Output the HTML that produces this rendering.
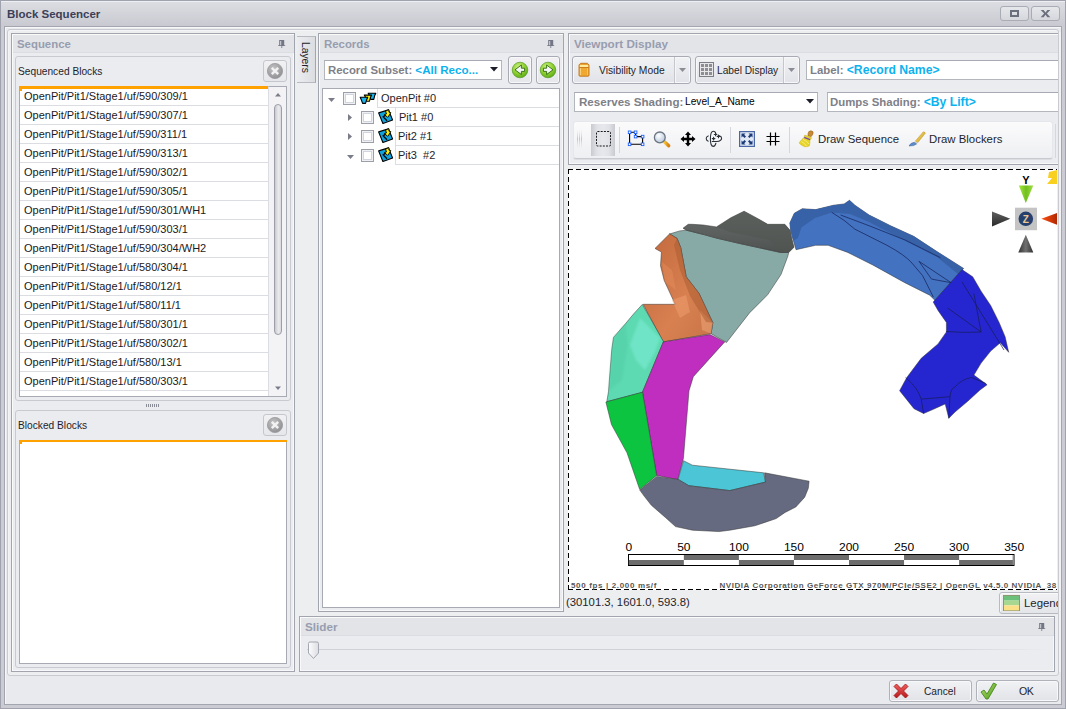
<!DOCTYPE html>
<html><head><meta charset="utf-8">
<style>
*{box-sizing:border-box}
html,body{margin:0;padding:0}
body{width:1066px;height:709px;overflow:hidden;position:relative;background:#cbccd3;font-family:"Liberation Sans",sans-serif;font-size:11px;color:#1e1e2a}
.a{position:absolute}
.t{position:absolute;white-space:nowrap;line-height:14px}
.panel{position:absolute;border:1px solid #a2a4ae;background:#ebecf0;box-shadow:inset 1px 1px 0 #fafafb,inset -1px -1px 0 #f8f8fa}
.hdr{position:absolute;left:1px;right:0;top:1px;height:18px;background:#e3e4e8;border-bottom:1px solid #dcdde2}
.htxt{position:absolute;font-weight:bold;color:#979daf;font-size:11.4px;white-space:nowrap;line-height:14px}
.pin{position:absolute;width:8px;height:9px}
.grp{position:absolute;border:1px solid #c9cacf;border-radius:3px}
.cbtn{position:absolute;border:1px solid #d0d1d6;border-radius:3px;background:linear-gradient(#f1f1f4,#e6e7eb)}
.list{position:absolute;background:#fff;border:1px solid #a8aab3;border-top:none}
.row{position:absolute;left:0;width:248px;height:19px;border-bottom:1px solid #dcdde2}
.row span{position:absolute;left:4px;top:2px;font-size:11px;line-height:14px;white-space:nowrap;color:#1a1a22}
.box{position:absolute;background:#fff;border:1px solid #b4b6be;border-top-color:#a8aab3}
.lbl{font-weight:bold;color:#7e8088}
.cy{font-weight:bold;color:#0cb2f0}
.chk{width:13px;height:13px;border:1px solid #9c9ea8;box-shadow:inset 0 0 0 1px #eef0f3,inset 0 0 0 2px #d2d5de;background:#fff}
.sbtn{position:absolute;border:1px solid #a9abb4;border-radius:3px;background:linear-gradient(#f1f2f4,#e2e3e8);box-shadow:inset 0 0 0 1px #f8f8fa}
</style></head>
<body>
<!-- window frame -->
<div class="a" style="left:0;top:0;width:1066px;height:709px;border:1px solid #a0a3ad;background:#cbccd3"></div>
<div class="a" style="left:1px;top:1px;width:1064px;height:25px;background:linear-gradient(#dcdde2,#c9cad1);border-top:1px solid #eeeff2"></div>
<div class="t" style="left:7px;top:7px;font-weight:bold;font-size:11.5px;color:#3b4058">Block Sequencer</div>
<div class="a" style="left:1000px;top:6px;width:29px;height:15px;border:1px solid #a9abb5;border-radius:3px;background:linear-gradient(#e6e7eb,#d6d7dc)"></div>
<div class="a" style="left:1010px;top:10px;width:9px;height:7px;border:2px solid #6c6f7c"></div>
<div class="a" style="left:1031px;top:6px;width:29px;height:15px;border:1px solid #a9abb5;border-radius:3px;background:linear-gradient(#e6e7eb,#d6d7dc)"></div>
<svg class="a" style="left:1040px;top:10px" width="11" height="8" viewBox="0 0 11 8"><path d="M0.7 0 H3.6 L5.5 2.5 L7.4 0 H10.3 L6.9 3.6 L10.3 7.2 H7.4 L5.5 4.7 L3.6 7.2 H0.7 L4.1 3.6 Z" fill="#6c6f7c"/></svg>
<!-- content area -->
<div class="a" style="left:4px;top:26px;width:1058px;height:679px;border:1px solid #a3a5af;background:#e9eaee;box-shadow:inset 1px 1px 0 #f7f7f9"></div>
<div class="a" style="left:7px;top:29px;width:1052px;height:647px;border:1px solid #cacbd1;border-radius:3px;background:#eceef0;box-shadow:inset 1px 1px 0 #f4f4f6"></div>

<!-- SEQUENCE PANEL -->
<div class="panel" style="left:11px;top:33px;width:284px;height:639px">
  <div class="hdr"></div>
</div>
<div class="htxt" style="left:17px;top:37px">Sequence</div>
<svg class="a" style="left:278px;top:40px" width="8" height="9" viewBox="0 0 8 9"><path d="M1.2 0 H6.2 V5.2 H7.2 V6 H4.2 V8 H3.4 V6 H0.2 V5.2 H1.2 Z" fill="#737684"/><rect x="2.2" y="1" width="1" height="4.2" fill="#d8d9de"/></svg>


<!-- Sequenced Blocks group -->
<div class="grp" style="left:15px;top:56px;width:276px;height:345px"></div>
<div class="t" style="left:18px;top:65px;font-size:10.2px">Sequenced Blocks</div>
<div class="cbtn" style="left:263px;top:60px;width:24px;height:22px;border-color:#c6c7cd"></div>
<svg class="a" style="left:266px;top:62px" width="18" height="18" viewBox="0 0 18 18"><defs><radialGradient id="cg" cx="0.4" cy="0.35" r="0.7"><stop offset="0" stop-color="#c4c4c6"/><stop offset="1" stop-color="#8e8e92"/></radialGradient></defs><circle cx="9" cy="9" r="7.6" fill="url(#cg)" stroke="#9a9a9e" stroke-width="0.8"/><path d="M5.8 5.8 L12.2 12.2 M12.2 5.8 L5.8 12.2" stroke="#f2f2f2" stroke-width="2.4"/></svg>
<div class="list" style="left:19px;top:86px;width:268px;height:311px;overflow:hidden">
  <div class="a" style="left:0;top:1px;width:249px;height:309px;overflow:hidden">
<div class="row" style="top:0px"><span>OpenPit/Pit1/Stage1/uf/590/309/1</span></div>
<div class="row" style="top:19px"><span>OpenPit/Pit1/Stage1/uf/590/307/1</span></div>
<div class="row" style="top:38px"><span>OpenPit/Pit1/Stage1/uf/590/311/1</span></div>
<div class="row" style="top:57px"><span>OpenPit/Pit1/Stage1/uf/590/313/1</span></div>
<div class="row" style="top:76px"><span>OpenPit/Pit1/Stage1/uf/590/302/1</span></div>
<div class="row" style="top:95px"><span>OpenPit/Pit1/Stage1/uf/590/305/1</span></div>
<div class="row" style="top:114px"><span>OpenPit/Pit1/Stage1/uf/590/301/WH1</span></div>
<div class="row" style="top:133px"><span>OpenPit/Pit1/Stage1/uf/590/303/1</span></div>
<div class="row" style="top:152px"><span>OpenPit/Pit1/Stage1/uf/590/304/WH2</span></div>
<div class="row" style="top:171px"><span>OpenPit/Pit1/Stage1/uf/580/304/1</span></div>
<div class="row" style="top:190px"><span>OpenPit/Pit1/Stage1/uf/580/12/1</span></div>
<div class="row" style="top:209px"><span>OpenPit/Pit1/Stage1/uf/580/11/1</span></div>
<div class="row" style="top:228px"><span>OpenPit/Pit1/Stage1/uf/580/301/1</span></div>
<div class="row" style="top:247px"><span>OpenPit/Pit1/Stage1/uf/580/302/1</span></div>
<div class="row" style="top:266px"><span>OpenPit/Pit1/Stage1/uf/580/13/1</span></div>
<div class="row" style="top:285px"><span>OpenPit/Pit1/Stage1/uf/580/303/1</span></div>
<div class="row" style="top:304px"><span>OpenPit/Pit1/Stage1/uf/580/305/1</span></div>
  </div>
  <div class="a" style="left:-1px;top:0;width:252px;height:3px;background:#ffa200"></div>
  <div class="a" style="left:-1px;top:0;width:3px;height:5px;background:#ffa200"></div>
  <div class="a" style="left:248px;top:0;width:19px;height:310px;background:#f3f3f6;border-left:1px solid #dcdde2;border-top:1px solid #a8aab3"></div>
  <svg class="a" style="left:253.5px;top:6px" width="8" height="5"><path d="M1 4.5 L4 1 L7 4.5 Z" fill="#7a7c88"/></svg>
  <div class="a" style="left:254px;top:18px;width:7.5px;height:231px;border:1px solid #9c9ea8;border-radius:4px;background:linear-gradient(90deg,#c9cad0,#ebebee 60%,#d8d9de)"></div>
  <svg class="a" style="left:253.5px;top:300px" width="8" height="5"><path d="M1 0.5 L7 0.5 L4 4 Z" fill="#7a7c88"/></svg>
</div>
<!-- splitter -->
<svg class="a" style="left:145px;top:403px" width="16" height="5"><rect x="1" y="1" width="1" height="3" fill="#8a8c96"/><rect x="3" y="1" width="1" height="3" fill="#8a8c96"/><rect x="5" y="1" width="1" height="3" fill="#8a8c96"/><rect x="7" y="1" width="1" height="3" fill="#8a8c96"/><rect x="9" y="1" width="1" height="3" fill="#8a8c96"/><rect x="11" y="1" width="1" height="3" fill="#8a8c96"/><rect x="13" y="1" width="1" height="3" fill="#8a8c96"/></svg>
<!-- Blocked Blocks group -->
<div class="grp" style="left:15px;top:410px;width:276px;height:258px"></div>
<div class="t" style="left:18px;top:419px;font-size:10.2px">Blocked Blocks</div>
<div class="cbtn" style="left:263px;top:414px;width:24px;height:22px;border-color:#c6c7cd"></div>
<svg class="a" style="left:266px;top:416px" width="18" height="18" viewBox="0 0 18 18"><circle cx="9" cy="9" r="7.6" fill="url(#cg)" stroke="#9a9a9e" stroke-width="0.8"/><path d="M5.8 5.8 L12.2 12.2 M12.2 5.8 L5.8 12.2" stroke="#f2f2f2" stroke-width="2.4"/></svg>
<div class="list" style="left:19px;top:440px;width:268px;height:224px">
  <div class="a" style="left:-1px;top:0;width:268px;height:2px;background:#ffa200"></div><div class="a" style="left:-1px;top:0;width:3px;height:4px;background:#ffa200"></div>
</div>


<!-- LAYERS TAB -->
<div class="a" style="left:297px;top:36px;width:19px;height:47px;border:1px solid #b8bac1;border-right-color:#a4a6af;border-left:none;background:linear-gradient(90deg,#ecedf0,#dcdde1)"></div>
<div class="t" style="left:297px;top:42px;width:14px;height:32px;font-size:10.3px;color:#1e1e2a"><div style="position:absolute;left:15px;top:0;transform-origin:0 0;transform:rotate(90deg);line-height:14px">Layers</div></div>

<!-- RECORDS PANEL -->
<div class="panel" style="left:318px;top:33px;width:246px;height:579px">
  <div class="hdr"></div>
</div>
<div class="htxt" style="left:324px;top:37px">Records</div>
<svg class="a" style="left:547px;top:40px" width="8" height="9" viewBox="0 0 8 9"><path d="M1.2 0 H6.2 V5.2 H7.2 V6 H4.2 V8 H3.4 V6 H0.2 V5.2 H1.2 Z" fill="#737684"/><rect x="2.2" y="1" width="1" height="4.2" fill="#d8d9de"/></svg>
<div class="box" style="left:324px;top:60px;width:178px;height:20px"></div>
<div class="t" style="left:328px;top:63px;font-size:11.4px"><span class="lbl">Record Subset:</span> <span class="cy" style="font-size:11.6px">&lt;All Reco...</span></div>
<svg class="a" style="left:490px;top:67px" width="8" height="5"><path d="M0 0 H8 L4 4.5 Z" fill="#1e1e2a"/></svg>
<div class="cbtn" style="left:508px;top:56px;width:24px;height:28px;border-color:#a9abb4;box-shadow:inset 0 0 0 1px #f8f8fa"></div>
<div class="cbtn" style="left:536px;top:56px;width:24px;height:28px;border-color:#a9abb4;box-shadow:inset 0 0 0 1px #f8f8fa"></div>
<svg class="a" style="left:511px;top:61px" width="18" height="18" viewBox="0 0 18 18"><defs><radialGradient id="gg" cx="0.4" cy="0.3" r="0.75"><stop offset="0" stop-color="#c8ee80"/><stop offset="0.55" stop-color="#8ed030"/><stop offset="1" stop-color="#5aa818"/></radialGradient></defs><circle cx="9" cy="9" r="7.8" fill="url(#gg)" stroke="#4a8f18" stroke-width="0.6"/><path d="M4 8.8 L10.4 4 V7.2 H13.6 V10.4 H10.4 V13.5 Z" fill="#f4f6f8" stroke="#2f6a0c" stroke-width="0.9" stroke-linejoin="round"/></svg>
<svg class="a" style="left:539px;top:61px" width="18" height="18" viewBox="0 0 18 18"><circle cx="9" cy="9" r="7.8" fill="url(#gg)" stroke="#4a8f18" stroke-width="0.6"/><path d="M14 8.8 L7.6 4 V7.2 H4.4 V10.4 H7.6 V13.5 Z" fill="#f4f6f8" stroke="#2f6a0c" stroke-width="0.9" stroke-linejoin="round"/></svg>
<div class="a" style="left:322px;top:88px;width:238px;height:520px;background:#fff;border:1px solid #a8aab3"></div>
<!-- tree rows -->
<div class="a" style="left:377px;top:89px;width:182px;height:19px;border-left:1px solid #dcdde2;border-bottom:1px solid #dcdde2"></div>
<div class="a" style="left:395px;top:108px;width:164px;height:19px;border-left:1px solid #dcdde2;border-bottom:1px solid #dcdde2"></div>
<div class="a" style="left:395px;top:127px;width:164px;height:19px;border-left:1px solid #dcdde2;border-bottom:1px solid #dcdde2"></div>
<div class="a" style="left:395px;top:146px;width:164px;height:19px;border-left:1px solid #dcdde2;border-bottom:1px solid #dcdde2"></div>
<svg class="a" style="left:327px;top:97px" width="9" height="6"><path d="M1 1 H8 L4.5 5 Z" fill="#7a7c88"/></svg>
<svg class="a" style="left:347px;top:113px" width="6" height="9"><path d="M1 1 V8 L5 4.5 Z" fill="#7a7c88"/></svg>
<svg class="a" style="left:347px;top:132px" width="6" height="9"><path d="M1 1 V8 L5 4.5 Z" fill="#7a7c88"/></svg>
<svg class="a" style="left:346px;top:154px" width="9" height="6"><path d="M1 1 H8 L4.5 5 Z" fill="#7a7c88"/></svg>
<div class="a chk" style="left:343px;top:92px"></div>
<div class="a chk" style="left:361px;top:111px"></div>
<div class="a chk" style="left:361px;top:130px"></div>
<div class="a chk" style="left:361px;top:149px"></div>
<svg class="a" style="left:359px;top:92px" width="18" height="13" viewBox="0 0 18 13"><g stroke="#000" stroke-width="1.1" stroke-linejoin="round"><path d="M9.2 1.2 L16.8 1.2 L15.6 3.8 L14.8 7.4 L11.7 7.4 L10.6 3.8 Z" fill="#18b4ee"/><path d="M5.3 3.1 L12.6 3 L11.4 5.6 L10.4 9.3 L7.7 9.3 L6.6 5.6 Z" fill="#f6ee10"/><path d="M1.2 5.3 L8.7 5.3 L7.6 8 L6.5 11.4 L3.6 11.4 L2.4 8 Z" fill="#18b4ee"/></g></svg>
<svg class="a pit" style="left:378px;top:109px" width="16" height="15" viewBox="0 0 16 15"><path d="M0.6 3.9 L10.5 0.9 L14.6 11 L4.9 14.5 Z" fill="#12a2dc" stroke="#000" stroke-width="1.1" stroke-linejoin="round"/><path d="M9.6 4.6 L5.2 7.9 L9 11.8" fill="none" stroke="#000" stroke-width="1.3"/><path d="M7.6 2.2 L10.8 0.6 L11 3.2 L12.8 3.6 L9.8 8.4 L6.4 5.6 L8.4 5 Z" fill="#f6f010" stroke="#000" stroke-width="0.9" stroke-linejoin="round"/></svg>
<svg class="a pit" style="left:378px;top:128px" width="16" height="15" viewBox="0 0 16 15"><path d="M0.6 3.9 L10.5 0.9 L14.6 11 L4.9 14.5 Z" fill="#12a2dc" stroke="#000" stroke-width="1.1" stroke-linejoin="round"/><path d="M9.6 4.6 L5.2 7.9 L9 11.8" fill="none" stroke="#000" stroke-width="1.3"/><path d="M7.6 2.2 L10.8 0.6 L11 3.2 L12.8 3.6 L9.8 8.4 L6.4 5.6 L8.4 5 Z" fill="#f6f010" stroke="#000" stroke-width="0.9" stroke-linejoin="round"/></svg>
<svg class="a pit" style="left:378px;top:147px" width="16" height="15" viewBox="0 0 16 15"><path d="M0.6 3.9 L10.5 0.9 L14.6 11 L4.9 14.5 Z" fill="#12a2dc" stroke="#000" stroke-width="1.1" stroke-linejoin="round"/><path d="M9.6 4.6 L5.2 7.9 L9 11.8" fill="none" stroke="#000" stroke-width="1.3"/><path d="M7.6 2.2 L10.8 0.6 L11 3.2 L12.8 3.6 L9.8 8.4 L6.4 5.6 L8.4 5 Z" fill="#f6f010" stroke="#000" stroke-width="0.9" stroke-linejoin="round"/></svg>
<div class="t" style="left:381px;top:91px">OpenPit #0</div>
<div class="t" style="left:399px;top:110px">Pit1 #0</div>
<div class="t" style="left:398px;top:129px">Pit2 #1</div>
<div class="t" style="left:398px;top:148px">Pit3 &nbsp;#2</div>


<div class="a" style="left:0;top:0;width:1058px;height:676px;overflow:hidden">
<!-- VIEWPORT DISPLAY PANEL -->
<div class="panel" style="left:568px;top:33px;width:500px;height:132px">
  <div class="hdr"></div>
</div>
<div class="htxt" style="left:574px;top:37px;font-size:11.7px">Viewport Display</div>
<!-- visibility mode split button -->
<div class="sbtn" style="left:572px;top:56px;width:119px;height:28px"></div>
<div class="a" style="left:674px;top:57px;width:1px;height:26px;background:#c6c7cd;box-shadow:1px 0 0 #f6f6f8"></div>
<svg class="a" style="left:578px;top:62px" width="12" height="15" viewBox="0 0 12 15"><path d="M2.6 1.3 H9.4 L11 2.9 V13.2 Q11 14.2 10 14.2 H2 Q1 14.2 1 13.2 V2.9 Z" fill="#eca232" stroke="#c07214" stroke-width="0.9"/><rect x="1.8" y="3" width="8.4" height="2" fill="#fff2a8" opacity="0.9"/><rect x="1.4" y="5.2" width="9.2" height="0.8" fill="#b86a10" opacity="0.8"/><rect x="1.9" y="6.2" width="1" height="7" fill="#ffe49a" opacity="0.8"/><rect x="9.1" y="6.2" width="1" height="7" fill="#ffe49a" opacity="0.6"/><rect x="3" y="6.2" width="6" height="7.2" fill="#f0a830"/></svg>
<div class="t" style="left:599px;top:64px;font-size:10.3px">Visibility Mode</div>
<svg class="a" style="left:679px;top:68px" width="8" height="5"><path d="M0 0 H7 L3.5 4 Z" fill="#8a8c96"/></svg>
<!-- label display split button -->
<div class="sbtn" style="left:695px;top:56px;width:105px;height:28px"></div>
<div class="a" style="left:783px;top:57px;width:1px;height:26px;background:#c6c7cd;box-shadow:1px 0 0 #f6f6f8"></div>
<svg class="a" style="left:699px;top:62px" width="16" height="15" viewBox="0 0 16 15"><rect x="0.5" y="0.5" width="14" height="14" fill="#e8e8ea" stroke="#7c7e86"/><g fill="#8c8e94"><rect x="2" y="2" width="3" height="3"/><rect x="6" y="2" width="3" height="3"/><rect x="10" y="2" width="3" height="3"/><rect x="2" y="6" width="3" height="3"/><rect x="6" y="6" width="3" height="3"/><rect x="10" y="6" width="3" height="3"/><rect x="2" y="10" width="3" height="3"/><rect x="6" y="10" width="3" height="3"/><rect x="10" y="10" width="3" height="3"/></g></svg>
<div class="t" style="left:717px;top:64px;font-size:10.2px">Label Display</div>
<svg class="a" style="left:788px;top:68px" width="8" height="5"><path d="M0 0 H7 L3.5 4 Z" fill="#8a8c96"/></svg>
<!-- label box -->
<div class="box" style="left:806px;top:60px;width:260px;height:20px"></div>
<div class="t" style="left:810px;top:63px;font-size:11.4px"><span class="lbl">Label:</span> <span class="cy" style="font-size:12.2px">&lt;Record Name&gt;</span></div>
<!-- reserves shading -->
<div class="box" style="left:574px;top:92px;width:244px;height:20px"></div>
<div class="t" style="left:579px;top:95px;font-size:11.6px"><span class="lbl">Reserves Shading:</span></div>
<div class="t" style="left:685px;top:95px;font-size:10.2px;color:#000">Level_A_Name</div>
<svg class="a" style="left:806px;top:99px" width="8" height="5"><path d="M0 0 H8 L4 4.5 Z" fill="#1e1e2a"/></svg>
<!-- dumps shading -->
<div class="box" style="left:827px;top:92px;width:240px;height:20px"></div>
<div class="t" style="left:830px;top:95px;font-size:11.4px"><span class="lbl">Dumps Shading:</span> <span class="cy" style="font-size:12.2px">&lt;By Lift&gt;</span></div>
<!-- toolbar -->
<div class="a" style="left:573px;top:121px;width:480px;height:38px;border-radius:3px;background:linear-gradient(#fbfbfc,#eeeff2);border:1px solid #e6e7eb;border-bottom-color:#c9cad0;box-shadow:0 1px 0 #dcdde2"></div>
<svg class="a" style="left:576px;top:129px" width="7" height="20"><defs><linearGradient id="grp" x1="0" x2="0" y1="0" y2="1"><stop offset="0" stop-color="#e0e1e5" stop-opacity="0"/><stop offset="0.5" stop-color="#c4c5cc"/><stop offset="1" stop-color="#e0e1e5" stop-opacity="0"/></linearGradient></defs><rect x="1" y="0" width="1" height="20" fill="url(#grp)"/><rect x="3" y="0" width="1" height="20" fill="url(#grp)"/><rect x="5" y="0" width="1" height="20" fill="url(#grp)"/></svg>
<div class="a" style="left:591px;top:124px;width:24px;height:32px;background:linear-gradient(90deg,#c8cad0,#e0e2e8 25%,#e6e8ec 50%,#e0e2e8 75%,#c8cad0)"></div>
<svg class="a" style="left:596px;top:131px" width="15" height="16"><rect x="0.5" y="0.5" width="14" height="14.5" rx="1" fill="none" stroke="#1a1a1a" stroke-width="1" stroke-dasharray="2 1.2"/></svg>
<div class="a" style="left:619px;top:127px;width:1px;height:26px;background:#d6d7dc"></div>
<svg class="a" style="left:627px;top:130px" width="18" height="17" viewBox="0 0 18 17"><path d="M2.6 2.3 H8.6 V6.6 H15.6 V14.3 H2.6 Z" fill="none" stroke="#000" stroke-width="1.1"/><g fill="#fff" stroke="#2060ff" stroke-width="0.9"><rect x="1.3" y="1" width="2.6" height="2.6"/><rect x="7.3" y="1" width="2.6" height="2.6"/><rect x="7.3" y="5.3" width="2.6" height="2.6"/><rect x="14.3" y="5.3" width="2.6" height="2.6"/><rect x="1.3" y="13" width="2.6" height="2.6"/><rect x="14.3" y="13" width="2.6" height="2.6"/></g></svg>
<svg class="a" style="left:653px;top:130px" width="18" height="18" viewBox="0 0 18 18"><defs><radialGradient id="mg" cx="0.4" cy="0.35" r="0.7"><stop offset="0" stop-color="#ffffff"/><stop offset="1" stop-color="#b4c8dc"/></radialGradient><linearGradient id="hg" x1="0" x2="1"><stop offset="0" stop-color="#f8d040"/><stop offset="1" stop-color="#d88010"/></linearGradient></defs><path d="M10.8 11.2 L15.6 15.8" stroke="url(#hg)" stroke-width="3.4" stroke-linecap="round"/><circle cx="6.8" cy="7.4" r="5.4" fill="url(#mg)" stroke="#6c7480" stroke-width="1.3"/></svg>
<svg class="a" style="left:680px;top:131px" width="16" height="16" viewBox="0 0 16 16"><path d="M8 0.5 L11 4 H9.2 V6.8 H12 V5 L15.5 8 L12 11 V9.2 H9.2 V12 H11 L8 15.5 L5 12 H6.8 V9.2 H4 V11 L0.5 8 L4 5 V6.8 H6.8 V4 H5 Z" fill="#000"/></svg>
<svg class="a" style="left:705px;top:130px" width="18" height="18" viewBox="0 0 18 18"><g fill="none" stroke="#2c3038" stroke-width="1.1" stroke-linecap="round"><path d="M10.8 3.6 Q10.4 1.2 8.3 1.2 Q5.4 1.2 5.4 8.8 Q5.4 16.4 8.3 16.4 Q10.2 16.4 10.9 13.2"/><path d="M3.2 5.9 Q1.2 6.6 1.2 8.6 Q1.2 10.6 3.2 11.2"/><path d="M7.2 11.5 H11.8 Q16.6 11 16.6 8.2 Q16.6 6.3 14.2 5.8"/><path d="M10.6 3.2 V5.8 M9.3 4.5 H11.9 M13.5 5.1 V7.7 M12.2 6.4 H14.8 M8.6 7.3 V9.9 M7.3 8.6 H9.9"/></g></svg>
<div class="a" style="left:730px;top:127px;width:1px;height:26px;background:#d6d7dc"></div>
<svg class="a" style="left:739px;top:131px" width="16" height="16" viewBox="0 0 16 16"><rect x="0.6" y="0.6" width="14.8" height="14.8" fill="#dfe8f4" stroke="#4a66a6" stroke-width="1.2"/><g fill="#1c3a78"><path d="M2.5 2.5 H6.5 L5.2 3.8 L7 5.6 L5.6 7 L3.8 5.2 L2.5 6.5 Z"/><path d="M13.5 2.5 V6.5 L12.2 5.2 L10.4 7 L9 5.6 L10.8 3.8 L9.5 2.5 Z"/><path d="M2.5 13.5 V9.5 L3.8 10.8 L5.6 9 L7 10.4 L5.2 12.2 L6.5 13.5 Z"/><path d="M13.5 13.5 H9.5 L10.8 12.2 L9 10.4 L10.4 9 L12.2 10.8 L13.5 9.5 Z"/></g></svg>
<svg class="a" style="left:766px;top:132px" width="14" height="14" viewBox="0 0 14 14"><path d="M4.5 0.5 V13.5 M9.5 0.5 V13.5 M0.5 4.5 H13.5 M0.5 9.5 H13.5" stroke="#000" stroke-width="1.2"/></svg>
<div class="a" style="left:789px;top:127px;width:1px;height:26px;background:#d6d7dc"></div>
<svg class="a" style="left:798px;top:130px" width="16" height="18" viewBox="0 0 16 18"><path d="M10.8 1.6 Q13 0 15 1.8 Q15.8 3.6 13.2 6.6 L10 5.9 Q9.8 3.2 10.8 1.6 Z" fill="#c88a34" stroke="#9a6418" stroke-width="0.6"/><path d="M6.8 5 L13.6 7.8 L12 10.2 Q12 14 11.2 16 Q8 17.2 6.2 16.6 Q2.5 15 1.1 12.9 Q3.5 9.5 6.2 7.2 Z" fill="#e6d42a" stroke="#c8b010" stroke-width="0.5"/><path d="M5 9.5 Q8 10.5 11 14 M3.2 11.5 Q6 12.5 8.5 16" stroke="#f6ee80" stroke-width="0.9" fill="none"/><path d="M6.2 7.3 L12 9.6" stroke="#7a4aa8" stroke-width="1.3"/></svg>
<div class="t" style="left:818px;top:132px;font-size:11.4px;color:#1e1e2a">Draw Sequence</div>
<svg class="a" style="left:908px;top:131px" width="18" height="16" viewBox="0 0 18 16"><defs><linearGradient id="bh" x1="0" x2="1" y1="0" y2="1"><stop offset="0" stop-color="#f8e070"/><stop offset="1" stop-color="#c89a20"/></linearGradient></defs><path d="M15.2 0.9 Q16.8 0.6 17.3 2.2 L9.6 11.8 L7.4 10.1 Z" fill="url(#bh)" stroke="#c09020" stroke-width="0.5"/><path d="M7.4 10.1 L9.6 11.8 L8.6 13 L6.2 11.3 Z" fill="#d4d0c0"/><path d="M6.2 11.3 L8.6 13 Q6 15.2 1 15 Q2.4 11.8 6.2 11.3 Z" fill="#5c8ccc" stroke="#3c64a0" stroke-width="0.5"/></svg>
<div class="t" style="left:929px;top:132px;font-size:11.4px;color:#1e1e2a">Draw Blockers</div>
<div class="a" style="left:1055px;top:124px;width:1px;height:34px;background:#d6d7dc"></div>


<!-- VIEWPORT RENDER -->
<div class="a" style="left:568px;top:169px;width:489px;height:421px;background:#fff;overflow:hidden">
  <svg class="a" style="left:0;top:0" width="489" height="421"><path d="M0.5 0 V421" stroke="#000" stroke-width="1" stroke-dasharray="5 3"/><path d="M0 0.5 H489" stroke="#000" stroke-width="1" stroke-dasharray="5 3"/><path d="M0 420.5 H489" stroke="#000" stroke-width="1" stroke-dasharray="5 3"/></svg>
  <svg id="scene" class="a" style="left:-568px;top:-169px" width="1066" height="709" viewBox="0 0 1066 709"><defs>
<filter id="soft" x="-20%" y="-20%" width="140%" height="140%"><feGaussianBlur stdDeviation="1.2"/></filter>
<linearGradient id="gDark" x1="0" x2="0" y1="0" y2="1"><stop offset="0" stop-color="#6a6e6c"/><stop offset="1" stop-color="#4e5250"/></linearGradient>
<linearGradient id="gSteel" x1="0" x2="1" y1="0" y2="1"><stop offset="0" stop-color="#3a66b4"/><stop offset="0.5" stop-color="#4474c4"/><stop offset="1" stop-color="#3c6cbc"/></linearGradient>
<linearGradient id="gMint" x1="0" x2="1" y1="0" y2="1"><stop offset="0" stop-color="#58d8a8"/><stop offset="0.6" stop-color="#7aeccc"/><stop offset="1" stop-color="#60dcb4"/></linearGradient>
<linearGradient id="gOr" x1="0" x2="1" y1="0" y2="1"><stop offset="0" stop-color="#c0683c"/><stop offset="0.6" stop-color="#d88050"/><stop offset="1" stop-color="#c87448"/></linearGradient>
</defs>
<g stroke="#333" stroke-width="0.5" stroke-linejoin="round">
<polygon points="669.2,234.1 679.7,230.9 686.3,230.2 704.7,234.8 716.5,238.1 738.8,243.3 780.8,252.5 788.7,252.5 787.9,256 781,274.5 767.6,294.8 749.5,312.9 726.5,342.5 711,333.7 712.8,322.7 699,293.3 686.2,276.8 680.7,247.5 677,238.3" fill="#88aaa6"/>
<polygon points="683,228.2 688.2,224.3 692.2,224.3 703.3,225 716.5,226.9 730.9,217.7 744.1,211.2 759.8,219.7 767.7,224.3 784.8,224.3 790,230.2 792,239.4 794,247.3 788.7,252.5 780.8,252.5 738.8,243.3 716.5,238.1 704.7,234.8 686.3,230.2" fill="url(#gDark)"/><polygon points="716.5,226.9 730.9,217.7 744.1,211.2 759.8,219.7 767.7,224.3 784.8,224.3 790,230.2 792,239.4 794,247.3 788.7,252.5 780.8,252.5 770,240 760,238 745,235 730,232" fill="#525654" stroke="none" opacity="0.6"/>
<polygon points="655,248.4 669.7,233.8 677,238.3 680.7,247.5 686.2,276.8 699,293.3 712.8,322.7 711,333.7 663.3,341.9 643.1,304.3 675.2,304.3 664.2,280.5 660.5,265.8 661.4,252.1" fill="url(#gOr)"/><g stroke="none"><polygon points="672,300 686,295 690,312 680,318" fill="#f0a070" opacity="0.5"/><polygon points="700,310 712.8,322.7 711,333.7 702,330" fill="#f4b080" opacity="0.45"/><polygon points="677,238.3 680.7,247.5 686.2,276.8 699,293.3 712.8,322.7 706,322 690,296 680,270 674,245" fill="#a85a30" opacity="0.5"/><polygon points="662,262 672,270 676,290 665,282" fill="#e89060" opacity="0.4"/></g>
<polygon points="642.3,304.4 663.5,341.6 642.3,392.4 606.8,401.7 608.5,391.5 610.2,369.5 611.8,349.2 613.5,337.4 625.4,323.8 633.8,313.7" fill="#5edab2"/><polygon points="640,318 660,338 655,352 645,370 636,360 630,345" fill="#8af4e4" stroke="none" opacity="0.4" filter="url(#soft)"/><polygon points="611.8,349.2 613.5,337.4 625.4,323.8 628,345 622,380 608.5,391.5 610.2,369.5" fill="#48c49c" stroke="none" opacity="0.3" filter="url(#soft)"/>
<polygon points="663.3,341.9 710,334.6 724.7,341.9 693.3,376.7 689,390.8 683.4,458.5 677.8,479.6 656.6,475.4 642.5,392.2" fill="#c02ec0"/>
<polygon points="605.9,402 642.5,392.2 656.6,475.4 639.7,489.5 627,452.8 611.5,424.6" fill="#0cc440"/>
<polygon points="683.5,460.7 692.4,465.2 763.7,472.8 765.5,482.1 729.8,490.6 688.8,485.7 678.1,479.4" fill="#4cc6d6"/>
<polygon points="639.8,490.1 656.7,476.4 678.1,479.4 688.8,485.7 729.8,490.6 765.5,482.1 764.6,472.8 809.1,481.2 808.3,488.3 804.7,497.2 795.8,507 785.1,512.4 776.2,518.6 754.8,525.8 729.8,530.2 719.1,531.6 692.4,530.2 675.5,526.6 665.7,517.7 651.4,505.3 644.3,496.3" fill="#656a80"/>
<polygon points="789.8,223 794.3,213.2 802.3,208.7 815.6,209.6 833.5,205.2 844.2,203.9 849.5,200.3 854.9,205.2 869.1,215 890.5,225.7 913.7,236.3 936.9,251.5 963.6,268.4 935.1,300.5 929.7,295.2 904.8,282.7 872.7,264.9 847.7,252.4 828.1,245.3 815.6,245.3 796,249.7 793.4,240.8 790.7,231" fill="#4272c0"/><polygon points="794.3,213.2 802.3,208.7 815.6,209.6 833.5,205.2 844.2,203.9 849.5,200.3 854.9,205.2 869.1,215 890.5,225.7 913.7,236.3 936.9,251.5 963.6,268.4 958,274 937,257 900,238 869,222 850,214 831.7,212.5 815,218 801.4,227.4 798,238 793.4,240.8 790.7,231 789.8,223" fill="#3862a8" stroke="none"/>
<polygon points="962,269.6 972.7,276.8 981.1,291.2 990.7,305.6 999.1,322.4 1005.1,336.7 1008.7,352.3 1000.3,342.7 990.7,351.1 981.1,363.1 973.9,375.1 987.1,384.7 980,390 968,401 955,412 948.8,418.3 945.2,403.9 934,409 923.6,413.5 914,408.7 899.6,390.7 906.8,377.5 921.2,358.3 938,343.9 946.4,331.9 946.4,322.4 938,310.4 933.2,302" fill="#2626d0"/>
</g>
<g fill="none" stroke="#141c50" stroke-width="0.9" opacity="0.75" stroke-linejoin="round">
<path d="M831.7 212.3 Q845 220 854.9 229.2 L887 245.3 Q905 255 912 263.1 L922.6 275.6 L933.3 297"/>
<path d="M840.6 215 L869 225.7 L904.8 239.9 L940.4 257.7"/>
<path d="M919 261.3 L951.1 282.7 L931.5 279.1 Z"/>
<path d="M947.6 308 L981.1 332 L973.9 293.6 M962 282 L1004 350"/>
<path d="M946 331.5 Q965 333 981.1 332"/>
<path d="M905.6 377.5 Q918 388 921.2 399.1 L923.6 413.5 M921.2 399.1 L950 396.7 M950 396.7 Q951 388 954.7 387.1 Q962 379 971.5 377.5 L985.9 383.5 M950 396.7 L948.8 418.3"/>
</g>
<!-- scale bar -->
<g>
<rect x="628.5" y="554.5" width="385.5" height="11" fill="#fff" stroke="#000" stroke-width="1"/>
<rect x="628.80" y="560" width="55.05" height="5" fill="#6c6c6c"/><rect x="683.85" y="555" width="55.05" height="5" fill="#6c6c6c"/><rect x="738.90" y="560" width="55.05" height="5" fill="#6c6c6c"/><rect x="793.95" y="555" width="55.05" height="5" fill="#6c6c6c"/><rect x="849.00" y="560" width="55.05" height="5" fill="#6c6c6c"/><rect x="904.05" y="555" width="55.05" height="5" fill="#6c6c6c"/><rect x="959.10" y="560" width="55.05" height="5" fill="#6c6c6c"/><rect x="1012.6" y="555" width="1.5" height="10" fill="#888"/></g>
<text transform="translate(628.80,551) scale(1,0.86)" text-anchor="middle" font-family="Liberation Sans" font-size="12" fill="#000">0</text><text transform="translate(683.85,551) scale(1,0.86)" text-anchor="middle" font-family="Liberation Sans" font-size="12" fill="#000">50</text><text transform="translate(738.90,551) scale(1,0.86)" text-anchor="middle" font-family="Liberation Sans" font-size="12" fill="#000">100</text><text transform="translate(793.95,551) scale(1,0.86)" text-anchor="middle" font-family="Liberation Sans" font-size="12" fill="#000">150</text><text transform="translate(849.00,551) scale(1,0.86)" text-anchor="middle" font-family="Liberation Sans" font-size="12" fill="#000">200</text><text transform="translate(904.05,551) scale(1,0.86)" text-anchor="middle" font-family="Liberation Sans" font-size="12" fill="#000">250</text><text transform="translate(959.10,551) scale(1,0.86)" text-anchor="middle" font-family="Liberation Sans" font-size="12" fill="#000">300</text><text transform="translate(1014.15,551) scale(1,0.86)" text-anchor="middle" font-family="Liberation Sans" font-size="12" fill="#000">350</text>
<text x="571" y="587.5" font-family="Liberation Sans" font-size="8" font-weight="bold" fill="#585858" letter-spacing="0.65">500 fps | 2.000 ms/f</text>
<text x="719.5" y="587.5" font-family="Liberation Sans" font-size="8" font-weight="bold" fill="#585858" letter-spacing="0.55">NVIDIA Corporation GeForce GTX 970M/PCIe/SSE2 | OpenGL v4.5.0 NVIDIA_38</text>
<!-- nav gizmo -->
<text x="1025.8" y="183.5" text-anchor="middle" font-family="Liberation Sans" font-size="11" font-weight="bold" fill="#000">Y</text>
<defs><linearGradient id="gGr" x1="0" x2="1"><stop offset="0" stop-color="#a8e840"/><stop offset="0.5" stop-color="#70c020"/><stop offset="1" stop-color="#a0e040"/></linearGradient>
<linearGradient id="gGy" x1="0" x2="0" y1="0" y2="1"><stop offset="0" stop-color="#606060"/><stop offset="1" stop-color="#2a2a2a"/></linearGradient>
<linearGradient id="gGy2" x1="0" x2="1"><stop offset="0" stop-color="#303030"/><stop offset="0.5" stop-color="#707070"/><stop offset="1" stop-color="#303030"/></linearGradient>
<linearGradient id="gRd" x1="0" x2="1"><stop offset="0" stop-color="#ff5010"/><stop offset="1" stop-color="#a02000"/></linearGradient></defs>
<path d="M1018.8 185.5 H1033.3 L1025.8 203 Z" fill="url(#gGr)"/>
<rect x="1015" y="207.7" width="22" height="22.5" fill="#c4c4c4"/>
<circle cx="1025.8" cy="218.8" r="7.3" fill="#26406e"/>
<text x="1025.8" y="222.6" text-anchor="middle" font-family="Liberation Sans" font-size="10" font-weight="bold" fill="#e8c898">Z</text>
<path d="M992 211.5 L1010.3 218.8 L992 226.4 Z" fill="url(#gGy)"/>
<path d="M1041.4 218.8 L1060 212 V226 Z" fill="url(#gRd)"/>
<path d="M1025.8 234.8 L1033.3 252.4 H1018.3 Z" fill="url(#gGy2)"/>
<path d="M1049 172 L1057 170 V184 L1047 184 L1052 178 L1048 178 Z" fill="#f8d020"/>
</svg>
</div>
<!-- status -->
<div class="t" style="left:566px;top:595px;font-size:11.3px;color:#1e1e2a">(30101.3, 1601.0, 593.8)</div>
<div class="a" style="left:999px;top:592px;width:70px;height:22px;border:1px solid #b8bac2;border-radius:3px;background:linear-gradient(#f2f2f5,#e4e5e9);box-shadow:inset 1px 1px 0 #fafafb"></div>
<svg class="a" style="left:1003px;top:595px" width="17" height="16" viewBox="0 0 17 16"><rect x="0.5" y="0.5" width="16" height="15" fill="#fff" stroke="#8a9a70"/><rect x="1" y="1" width="15" height="4.6" fill="#6cc07a"/><rect x="1" y="5.6" width="15" height="4.8" fill="#a8d890"/><rect x="1" y="10.4" width="15" height="5" fill="#fce088"/></svg>
<div class="t" style="left:1024px;top:596px;font-size:11.4px;color:#1e1e2a">Legend</div>

</div>
<!-- right frame overlay -->
<div class="a" style="left:1058px;top:33px;width:1px;height:638px;background:#cacbd1"></div>
<div class="a" style="left:1059px;top:32px;width:2px;height:640px;background:#f2f2f5"></div>

<!-- SLIDER PANEL -->
<div class="panel" style="left:299px;top:616px;width:756px;height:56px">
  <div class="hdr"></div>
</div>
<div class="htxt" style="left:305px;top:620px;font-size:11.7px">Slider</div>
<svg class="a" style="left:1038px;top:623px" width="8" height="9" viewBox="0 0 8 9"><path d="M1.2 0 H6.2 V5.2 H7.2 V6 H4.2 V8 H3.4 V6 H0.2 V5.2 H1.2 Z" fill="#737684"/><rect x="2.2" y="1" width="1" height="4.2" fill="#d8d9de"/></svg>
<div class="a" style="left:307px;top:649px;width:740px;height:1px;background:linear-gradient(90deg,#d0d1d6 85%,rgba(208,209,214,0))"></div>
<svg class="a" style="left:307px;top:641px" width="13" height="19" viewBox="0 0 13 19"><defs><linearGradient id="sg" x1="0" x2="1"><stop offset="0" stop-color="#fdfdfe"/><stop offset="1" stop-color="#dcdde2"/></linearGradient></defs><path d="M1.5 2.5 Q1.5 1 3 1 H10 Q11.5 1 11.5 2.5 V12 L6.5 17.5 L1.5 12 Z" fill="url(#sg)" stroke="#a4a6b0" stroke-width="1"/></svg>

<!-- BOTTOM BUTTONS -->
<div class="sbtn" style="left:889px;top:680px;width:83px;height:22px;border-color:#b0b2ba"></div>
<svg class="a" style="left:893px;top:683px" width="16" height="16" viewBox="0 0 16 16"><defs><linearGradient id="rg" x1="0" x2="0" y1="0" y2="1"><stop offset="0" stop-color="#f06060"/><stop offset="1" stop-color="#b81818"/></linearGradient></defs><path d="M1 3.5 L3.5 1 L8 5.5 L12.5 1 L15 3.5 L10.5 8 L15 12.5 L12.5 15 L8 10.5 L3.5 15 L1 12.5 L5.5 8 Z" fill="url(#rg)" stroke="#a01010" stroke-width="0.8" stroke-linejoin="round"/></svg>
<div class="t" style="left:924px;top:685px;font-size:10.2px;color:#1e1e2a">Cancel</div>
<div class="sbtn" style="left:976px;top:680px;width:83px;height:22px;border-color:#b0b2ba"></div>
<svg class="a" style="left:980px;top:682px" width="17" height="18" viewBox="0 0 17 18"><defs><linearGradient id="kg" x1="0" x2="1" y1="0" y2="1"><stop offset="0" stop-color="#b8e070"/><stop offset="1" stop-color="#4a9a18"/></linearGradient></defs><path d="M1 10 L4 8 L7 12 L13.5 1 L16.5 2.5 L8 17 L6 17 Z" fill="url(#kg)" stroke="#3a8010" stroke-width="0.8" stroke-linejoin="round"/></svg>
<div class="t" style="left:1019px;top:684px;font-size:10.6px;letter-spacing:-0.6px;color:#1e1e2a">OK</div>

</body></html>
